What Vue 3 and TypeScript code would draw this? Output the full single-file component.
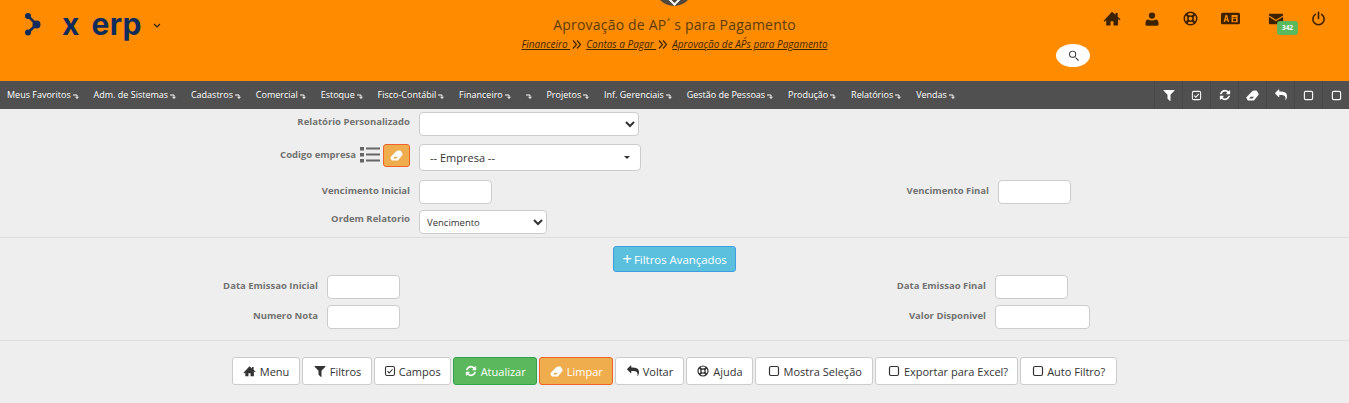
<script setup lang="ts">
import { h } from 'vue';

// font-awesome 4 style paths, 1792 grid
const paths: Record<string, string> = {
  home: 'M896 170L1240 470V290h220v370l290 260-90 90-160-140v670H1040v-420H752v420H320V1030l-160 140-90-90z',
  filter: 'M1595 295q17 41-14 70l-493 493v742q0 42-39 59-13 5-25 5-27 0-45-19l-256-256q-19-19-19-45v-486l-493-493q-31-29-14-70 17-39 59-39h1280q42 0 59 39z',
  refresh: 'M1639 1056q0 5-1 7-64 268-268 434.500t-478 166.500q-146 0-282.500-55t-243.500-157l-129 129q-19 19-45 19t-45-19-19-45v-448q0-26 19-45t45-19h448q26 0 45 19t19 45-19 45l-137 137q71 66 161 102t187 36q134 0 250-65t186-179q11-17 53-117 8-23 30-23h192q13 0 22.500 9.500t9.500 22.500zm25-800v448q0 26-19 45t-45 19h-448q-26 0-45-19t-19-45 19-45l138-138q-148-137-349-137-134 0-250 65t-186 179q-11 17-53 117-8 23-30 23h-199q-13 0-22.500-9.500t-9.500-22.500v-7q65-268 270-434.500t480-166.500q146 0 284 55.500t245 156.500l130-129q19-19 45-19t45 19 19 45z',
  reply: 'M1792 1120q0 166-127 451-3 7-10.500 24t-13.500 30-13 22q-12 17-28 17-15 0-23.500-10t-8.500-25q0-9 2.500-26.500t2.500-23.500q5-68 5-123 0-101-17.500-181t-48.500-138.500-80-101-105.500-69.500-133-42.500-154-21.500-175.500-6h-224v256q0 26-19 45t-45 19-45-19l-512-512q-19-19-19-45t19-45l512-512q19-19 45-19t45 19 19 45v256h224q713 0 875 403 53 134 53 333z',
  user: 'M896 160a352 352 0 1 1 0 704a352 352 0 1 1 0-704zM340 1664q-180 0-180-190q0-520 300-520q150 110 436 110t436-110q300 0 300 520q0 190-180 190z',
  envelope: 'M100 430q0-110 110-110h1372q110 0 110 110v60l-796 500-796-500zM100 650v730q0 110 110 110h1372q110 0 110-110v-730l-796 500z',
  search: 'M780 230a490 490 0 1 0 0 980a490 490 0 1 0 0-980zm0 130a360 360 0 1 1 0 720a360 360 0 1 1 0-720zM1120 1220l100-100 400 400q30 30 0 70l-30 30q-40 30-70 0z',
};

// small helper so every icon in the template stays one line
const Ico = (props: { n: string; s?: number }) => {
  const size = props.s ?? 12;
  const common = { width: size, height: size, class: 'ico', style: 'display:block;flex:none' };
  if (props.n === 'eraser')
    return h('svg', { ...common, viewBox: '0 0 14 14', fill: 'currentColor' }, [
      h('path', {
        'fill-rule': 'evenodd',
        d: 'M7 2.200Q7.800 1.500 9 1.500h1.500q1 0 1.500.8l1.500 2.700q.4.800-.2 1.500L9 11.800q-.5.700-1.300.7H3q-.9 0-1.400-.7L.6 10q-.5-.8.1-1.500zM3.200 10.300h3.800l1.700-2H5z',
      }),
    ]);
  if (props.n === 'check')
    return h('svg', { ...common, viewBox: '0 0 24 24', fill: 'none', stroke: 'currentColor', 'stroke-width': 2.2 }, [
      h('rect', { x: 3, y: 3, width: 18, height: 18, rx: 3 }),
      h('path', { d: 'M7 12.500l3.500 3.500L17 8.500' }),
    ]);
  if (props.n === 'square')
    return h('svg', { ...common, viewBox: '0 0 24 24', fill: 'none', stroke: 'currentColor', 'stroke-width': 2.4 }, [
      h('rect', { x: 3, y: 3, width: 18, height: 18, rx: 3 }),
    ]);
  if (props.n === 'ring')
    return h('svg', { ...common, viewBox: '0 0 24 24', fill: 'none', stroke: 'currentColor', 'stroke-width': 2.4 }, [
      h('circle', { cx: 12, cy: 12, r: 10 }),
      h('circle', { cx: 12, cy: 12, r: 4.200 }),
      h('path', { d: 'M5 5l4 4M19 5l-4 4M5 19l4-4M19 19l-4-4', 'stroke-width': 3.600 }),
    ]);
  if (props.n === 'power')
    return h('svg', { ...common, viewBox: '0 0 24 24', fill: 'none', stroke: 'currentColor', 'stroke-width': 2.600, 'stroke-linecap': 'round' }, [
      h('path', { d: 'M7 5.500a9 9 0 1 0 10 0M12 2v10' }),
    ]);
  if (props.n === 'card')
    return h('svg', { ...common, viewBox: '0 0 36 24' }, [
      h('rect', { x: 0, y: 1, width: 36, height: 22, rx: 3, fill: 'currentColor' }),
      h('path', { d: 'M8.500 5.500h3l4 13h-2.500l-.8-2.800H8.300l-.8 2.800H5zm1.500 3L8.900 13.500h2.300z', fill: '#ff8c00' }),
      h('path', { d: 'M20 5.500h11.500V19H20zm2 3.500v1.800h7.500V9zm1 3.500v4.500h5.500v-4.500z', fill: '#ff8c00', 'fill-rule': 'evenodd' }),
    ]);
  if (props.n === 'list')
    return h('svg', { ...common, width: 20, height: 18, viewBox: '0 0 20 18', fill: 'currentColor' }, [
      h('rect', { x: 0, y: 1, width: 4, height: 3.500 }),
      h('rect', { x: 0, y: 7, width: 4, height: 3.500 }),
      h('rect', { x: 0, y: 13, width: 4, height: 3.500 }),
      h('rect', { x: 6, y: 1.500, width: 14, height: 2 }),
      h('rect', { x: 6, y: 7.500, width: 14, height: 2 }),
      h('rect', { x: 6, y: 13.500, width: 14, height: 2 }),
    ]);
  return h('svg', { ...common, viewBox: '0 0 1792 1792', fill: 'currentColor' }, [h('path', { d: paths[props.n] })]);
};

const menus = ['Meus Favoritos', 'Adm. de Sistemas', 'Cadastros', 'Comercial', 'Estoque', 'Fisco-Contábil', 'Financeiro', '', 'Projetos', 'Inf. Gerenciais', 'Gestão de Pessoas', 'Produção', 'Relatórios', 'Vendas'];
const tools = [
  { n: 'filter', s: 14 },
  { n: 'check', s: 11 },
  { n: 'refresh', s: 12 },
  { n: 'eraser', s: 13 },
  { n: 'reply', s: 12 },
  { n: 'square', s: 11 },
  { n: 'square', s: 11 },
];
const topIcons = [
  { n: 'home', s: 18, cls: 'home' },
  { n: 'user', s: 16, cls: 'user' },
  { n: 'ring', s: 15, cls: 'ring' },
  { n: 'card', s: 19, cls: 'card' },
  { n: 'envelope', s: 16, cls: 'env' },
  { n: 'power', s: 15, cls: 'power' },
];
const actions = [
  { t: 'Menu', i: 'home', s: 13, c: 'b-menu' },
  { t: 'Filtros', i: 'filter', s: 14, c: 'b-filtros' },
  { t: 'Campos', i: 'check', s: 12, c: 'b-campos' },
  { t: 'Atualizar', i: 'refresh', s: 12, c: 'green' },
  { t: 'Limpar', i: 'eraser', s: 13, c: 'orange' },
  { t: 'Voltar', i: 'reply', s: 12, c: '' },
  { t: 'Ajuda', i: 'ring', s: 12, c: 'b-ajuda' },
  { t: 'Mostra Seleção', i: 'square', s: 12, c: 'wide' },
  { t: 'Exportar para Excel?', i: 'square', s: 12, c: 'wide b-excel' },
  { t: 'Auto Filtro?', i: 'square', s: 12, c: 'b-auto' },
];
</script>

<template>
  <div class="page">
    <header class="top">
      <div class="logo">
        <svg width="16" height="23" viewBox="0 0 16 23" class="logo-mark">
          <path d="M3 3L11.500 11.500L3 19.500" fill="none" stroke="#0f2c5c" stroke-width="2.600" />
          <circle cx="3" cy="3" r="3" fill="#0f2c5c" />
          <circle cx="3" cy="19.500" r="3" fill="#0f2c5c" />
          <circle cx="11.500" cy="11.500" r="4" fill="#0f2c5c" />
        </svg>
        <span class="logo-x">x</span>
        <span class="logo-erp">erp</span>
        <svg class="logo-caret" width="8" height="6" viewBox="0 0 8 6"><path d="M1 1l3 3 3-3" fill="none" stroke="#222" stroke-width="1.200" /></svg>
      </div>
      <div class="center">
        <div class="pull"><span></span></div>
        <h1>Aprovação de AP´ s para Pagamento</h1>
        <div class="crumbs">
          <a>Financeiro&nbsp;</a><svg class="sep" width="10" height="9" viewBox="0 0 10 9"><path d="M1 .5l3.500 4L1 8.500M5 .5l3.500 4L5 8.500" fill="none" stroke="#3e2708" stroke-width="1.200" /></svg>
          <a>Contas a Pagar&nbsp;</a><svg class="sep" width="10" height="9" viewBox="0 0 10 9"><path d="M1 .5l3.500 4L1 8.500M5 .5l3.500 4L5 8.500" fill="none" stroke="#3e2708" stroke-width="1.200" /></svg>
          <a>Aprovação de AP´s para Pagamento</a>
        </div>
      </div>
      <div class="right">
        <div class="top-icons">
          <span v-for="ic in topIcons" :key="ic.cls" :class="['ti', ic.cls]">
            <Ico :n="ic.n" :s="ic.s" />
            <b v-if="ic.cls === 'env'" class="badge">342</b>
          </span>
        </div>
        <div class="search"><Ico n="search" :s="13" /></div>
      </div>
    </header>

    <nav class="bar">
      <ul class="menu">
        <li v-for="(m, i) in menus" :key="i">{{ m }}<svg width="7" height="5" viewBox="0 0 7 5"><path d="M0 1h4v3M2.500 2.800L4 4.500 5.500 2.800" fill="none" stroke="#fff" stroke-width="1" /></svg></li>
      </ul>
      <div class="tools">
        <span v-for="(t, i) in tools" :key="i" class="tool"><Ico :n="t.n" :s="t.s" /></span>
      </div>
    </nav>

    <form class="form" @submit.prevent>
      <section class="block first">
        <label class="l1">Relatório Personalizado</label>
        <select class="ctl sel-a"><option></option></select>
        <span></span><span></span>

        <label class="with-tools">Codigo empresa <span class="lst"><Ico n="list" /></span><button type="button" class="mini"><Ico n="eraser" :s="13" /></button></label>
        <div class="ctl sel-b">-- Empresa --<i></i></div>
        <span></span><span></span>

        <label>Vencimento Inicial</label>
        <input class="ctl date" />
        <label>Vencimento Final</label>
        <input class="ctl date" />

        <label class="l4">Ordem Relatorio</label>
        <select class="ctl sel-c"><option>Vencimento</option></select>
        <span></span><span></span>
      </section>

      <div class="adv-wrap">
        <button type="button" class="adv"><span class="plus">+</span>Filtros Avançados</button>
      </div>

      <section class="block second">
        <label>Data Emissao Inicial</label>
        <input class="ctl date" />
        <label>Data Emissao Final</label>
        <input class="ctl date" />

        <label>Numero Nota</label>
        <input class="ctl date" />
        <label>Valor Disponivel</label>
        <input class="ctl val" />
      </section>

      <div class="actions">
        <button v-for="a in actions" :key="a.t" type="button" :class="['btn', a.c]"><Ico :n="a.i" :s="a.s" />{{ a.t }}</button>
      </div>
    </form>
  </div>
</template>

<style>
html, body { background: #eee; overflow: hidden; }
</style>

<style scoped>
.page {
  font-family: "Open Sans", "Noto Sans", sans-serif;
  color: #333;
}

.top {
  height: 81px;
  background: #ff8c00;
  display: grid;
  grid-template-columns: 1fr auto 1fr;
  overflow: hidden;
}

.logo {
  display: flex;
  align-items: flex-start;
  padding: 10px 0 0 25px;
  color: #0f2c5c;
  font-family: Inter, sans-serif;
  font-weight: 700;
  font-size: 30px;
  line-height: 28px;
}
.logo-mark { margin-top: 3px; }
.logo-x { margin-left: 21px; }
.logo-erp { margin-left: 12px; letter-spacing: .4px; }
.logo-caret { margin: 13px 0 0 11px; }

.center {
  position: relative;
  text-align: center;
  padding-top: 16px;
}
.pull {
  position: absolute;
  left: 50%;
  top: -32px;
  width: 38px;
  height: 38px;
  margin-left: -19px;
  border-radius: 50%;
  background: #50483f;
}
.pull span {
  position: absolute;
  left: 15px;
  top: 27px;
  width: 7px;
  height: 7px;
  border: solid #fff;
  border-width: 0 2px 2px 0;
  transform: rotate(45deg);
}
.center h1 {
  margin: 0;
  font-size: 14px;
  line-height: 18px;
  font-weight: 400;
  letter-spacing: .2px;
  color: #5a3c14;
}
.crumbs {
  margin-top: 3px;
  font-size: 10px;
  line-height: 14px;
  font-style: italic;
  color: #3e2708;
}
.crumbs a { text-decoration: underline; }
.crumbs .sep { margin: 0 4px 0 2px; vertical-align: -1px; }

.right {
  display: flex;
  flex-direction: column;
  align-items: flex-end;
  padding-top: 10px;
}
.top-icons {
  display: flex;
  align-items: center;
  padding-right: 23px;
  color: #3d2200;
  height: 17px;
}
.ti { position: relative; display: block; }
.user { margin-left: 23px; }
.ring { margin-left: 23px; }
.card { margin-left: 23px; }
.env { margin-left: 28px; }
.power { margin-left: 27px; }
.badge {
  position: absolute;
  left: 9px;
  top: 10px;
  width: 21px;
  height: 14px;
  border-radius: 3px;
  background: #5cb85c;
  color: #fff;
  font-size: 6.5px;
  line-height: 14px;
  text-align: center;
}
.search {
  margin: 17px 259px 0 0;
  width: 34px;
  height: 23px;
  border-radius: 50%;
  background: #fff;
  color: #222;
  display: flex;
  align-items: center;
  justify-content: center;
}

.bar {
  height: 28px;
  background: #505050;
  display: flex;
  justify-content: space-between;
  color: #fff;
}
.menu {
  margin: 0;
  padding: 0 0 0 7px;
  list-style: none;
  display: flex;
  gap: 13.85px;
  font-size: 9px;
  line-height: 28px;
}
.menu li { display: flex; align-items: center; gap: 2px; white-space: nowrap; }
.menu svg { margin-top: 3px; }
.tools { display: flex; margin-right: -1px; }
.tool {
  width: 28px;
  box-sizing: border-box;
  border-left: 1px solid #484848;
  display: flex;
  align-items: center;
  justify-content: center;
}

.form { font-size: 9.5px; }
.block {
  display: grid;
  column-gap: 9px;
  align-items: start;
}
.block label {
  text-align: right;
  font-weight: 700;
  color: #727272;
  line-height: 14px;
  padding-top: 4px;
  white-space: nowrap;
}
.block .l1 { padding-top: 3px; }
.block .l4 { padding-top: 2px; }
.first {
  grid-template-columns: 410px 440px 121px auto;
  padding-top: 3px;
  border-bottom: 1px solid #ddd;
  height: 125px;
  align-content: start;
  row-gap: 6px;
  box-sizing: content-box;
}
.first .with-tools { margin-top: 2px; }
.first .sel-b { margin: 2px 0 3px; }
.second {
  grid-template-columns: 318px 520px 130px auto;
  row-gap: 6px;
  padding-bottom: 11px;
  border-bottom: 1px solid #ddd;
}

.ctl {
  box-sizing: border-box;
  border: 1px solid #ccc;
  border-radius: 4px;
  background: #fff;
  font: inherit;
  font-weight: 400;
  color: #333;
  display: block;
}
.sel-a { width: 220px; height: 24px; }
.sel-b {
  width: 222px;
  height: 27px;
  padding: 0 10px;
  font-size: 11px;
  line-height: 26px;
  position: relative;
}
.sel-b i {
  position: absolute;
  right: 10px;
  top: 11px;
  border: 3px solid transparent;
  border-top: 3px solid #333;
}
.date { width: 73px; height: 24px; }
.val { width: 95px; height: 24px; }
.sel-c { width: 128px; height: 24px; font-size: 9.5px; padding-left: 3px; }

.with-tools {
  display: flex;
  justify-content: flex-end;
  align-items: flex-start;
  gap: 3px;
}
.lst { color: #666; margin: -2px 0 0 1px; }
.mini {
  width: 27px;
  height: 23px;
  margin-top: -4px;
  border: 1px solid #f0642c;
  border-radius: 3px;
  background: #f0ad4e;
  color: #fff;
  display: flex;
  align-items: center;
  justify-content: center;
  padding: 0;
}

.adv-wrap { display: flex; justify-content: center; padding: 8px 0 3px; }
.adv {
  width: 123px;
  height: 26px;
  padding: 0;
  border: 1px solid #3d9fe0;
  border-radius: 3px;
  background: #5bc0de;
  color: #fff;
  font: inherit;
  font-size: 11.4px;
  display: flex;
  align-items: center;
  justify-content: center;
  gap: 2px;
}
.plus { font-size: 17px; line-height: 20px; }

.actions {
  display: flex;
  justify-content: center;
  gap: 2px;
  padding-top: 16px;
}
.btn {
  height: 28px;
  padding: 0 10px 0 11px;
  border: 1px solid #ccc;
  border-radius: 3px;
  background: #fff;
  color: #333;
  font: inherit;
  font-size: 11px;
  display: flex;
  align-items: center;
  gap: 4px;
  white-space: nowrap;
}
.btn.green { background: #5cb85c; border-color: #2ea44f; color: #fff; }
.btn.orange { background: #f0ad4e; border-color: #f0642c; color: #fff; padding: 0 9px 0 10px; }
.btn.wide { padding-left: 12px; }
.btn.b-menu { padding: 0 10px 0 10px; }
.btn.b-filtros { padding: 0 9.5px; gap: 3px; }
.btn.b-campos { padding: 0 9px; gap: 3px; }
.btn.b-ajuda { padding: 0 9px 0 10px; }
.btn.b-excel { padding-right: 9px; }
.btn.b-auto { padding: 0 11px; gap: 3px; }
</style>
